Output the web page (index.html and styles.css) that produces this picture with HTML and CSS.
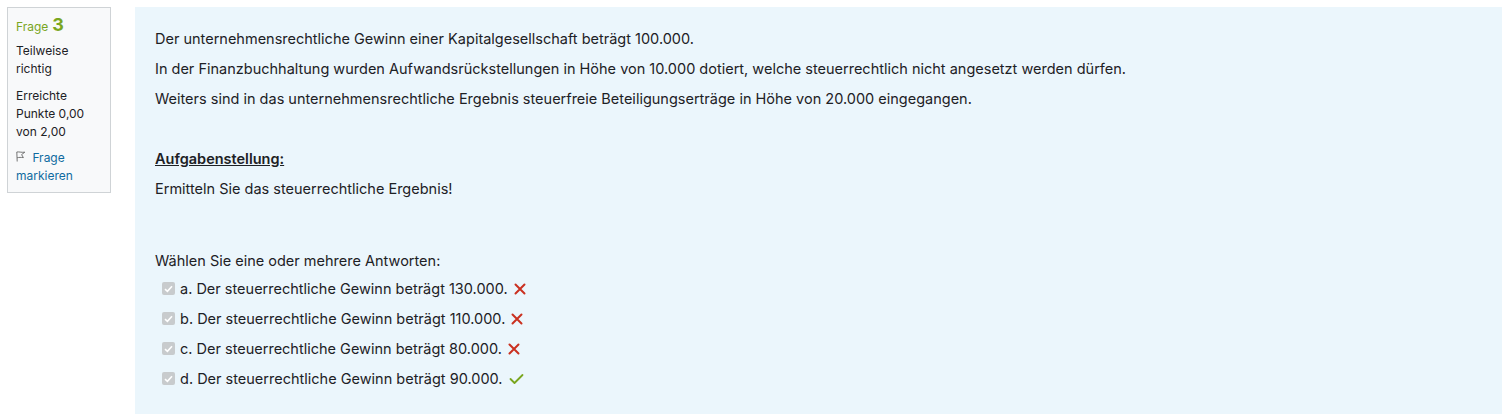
FILE: index.html
```html
<!DOCTYPE html>
<html lang="de">
<head>
<meta charset="utf-8">
<link rel="stylesheet" href="styles.css">
</head>
<body>
<div class="que">
  <div class="info">
    <h3 class="no"><span class="qlabel">Frage</span> <span class="qno">3</span></h3>
    <div class="state">Teilweise richtig</div>
    <div class="grade">Erreichte Punkte 0,00 von 2,00</div>
    <div class="flag">
      <svg class="flagicon" width="10" height="11" viewBox="0 0 10 11"><path d="M1.2 10.5 L0.8 1 M0.8 1 C3 0.6 5 1.6 8.8 1.2 L5.6 3.6 L7.4 6.6 C5 6.4 3 6.2 1.1 6.8" fill="none" stroke="#666" stroke-width="0.9" stroke-linejoin="round"/></svg>
      <a href="#">Frage markieren</a>
    </div>
  </div>
  <div class="content">
    <div class="qtext">
      <p>Der unternehmensrechtliche Gewinn einer Kapitalgesellschaft beträgt 100.000.</p>
      <p>In der Finanzbuchhaltung wurden Aufwandsrückstellungen in Höhe von 10.000 dotiert, welche steuerrechtlich nicht angesetzt werden dürfen.</p>
      <p>Weiters sind in das unternehmensrechtliche Ergebnis steuerfreie Beteiligungserträge in Höhe von 20.000 eingegangen.</p>
      <p>&nbsp;</p>
      <p><strong class="task">Aufgabenstellung:</strong></p>
      <p>Ermitteln Sie das steuerrechtliche Ergebnis!</p>
      <p>&nbsp;</p>
    </div>
    <div class="prompt">Wählen Sie eine oder mehrere Antworten:</div>
    <div class="answers">
      <div class="opt"><span class="cb"><svg width="9" height="8" viewBox="0 0 9 8"><path d="M1 4.2 L3.4 6.4 L8 1.2" fill="none" stroke="#fff" stroke-width="1.6"/></svg></span><span>a. Der steuerrechtliche Gewinn beträgt 130.000.</span><svg class="mark" width="12" height="12" viewBox="0 0 12 12"><path d="M1.5 1.5 L10.5 10.5 M10.5 1.5 L1.5 10.5" stroke="#ca3120" stroke-width="2" stroke-linecap="round"/></svg></div>
      <div class="opt"><span class="cb"><svg width="9" height="8" viewBox="0 0 9 8"><path d="M1 4.2 L3.4 6.4 L8 1.2" fill="none" stroke="#fff" stroke-width="1.6"/></svg></span><span>b. Der steuerrechtliche Gewinn beträgt 110.000.</span><svg class="mark" width="12" height="12" viewBox="0 0 12 12"><path d="M1.5 1.5 L10.5 10.5 M10.5 1.5 L1.5 10.5" stroke="#ca3120" stroke-width="2" stroke-linecap="round"/></svg></div>
      <div class="opt"><span class="cb"><svg width="9" height="8" viewBox="0 0 9 8"><path d="M1 4.2 L3.4 6.4 L8 1.2" fill="none" stroke="#fff" stroke-width="1.6"/></svg></span><span>c. Der steuerrechtliche Gewinn beträgt 80.000.</span><svg class="mark" width="12" height="12" viewBox="0 0 12 12"><path d="M1.5 1.5 L10.5 10.5 M10.5 1.5 L1.5 10.5" stroke="#ca3120" stroke-width="2" stroke-linecap="round"/></svg></div>
      <div class="opt"><span class="cb"><svg width="9" height="8" viewBox="0 0 9 8"><path d="M1 4.2 L3.4 6.4 L8 1.2" fill="none" stroke="#fff" stroke-width="1.6"/></svg></span><span>d. Der steuerrechtliche Gewinn beträgt 90.000.</span><svg class="mark ok" width="15" height="12" viewBox="0 0 15 12"><path d="M1.5 6 L5.5 10 L13.5 2" fill="none" stroke="#7aa61f" stroke-width="1.8" stroke-linecap="round" stroke-linejoin="round"/></svg></div>
    </div>
  </div>
</div>
</body>
</html>
```
FILE: styles.css
```css
html, body {
  margin: 0;
  padding: 0;
  background: #fff;
}
body {
  font-family: Inter, "Noto Sans", "Liberation Sans", sans-serif;
  color: #1d2125;
  font-size: 14px;
}
.que {
  display: flex;
  align-items: flex-start;
  padding: 7px 10px 0 7px;
  gap: 24px;
}
.info {
  width: 104px;
  box-sizing: border-box;
  flex: none;
  background: #f8f9fa;
  border: 1px solid #cfd3d6;
  padding: 6px 8px 7px 8px;
  font-size: 12px;
  line-height: 18px;
  color: #1d2125;
}
.info h3 {
  margin: 0 0 4px 0;
  font-weight: normal;
  line-height: 22px;
}
.qlabel {
  color: #7aa61f;
  font-size: 12px;
}
.qno {
  color: #7aa61f;
  font-size: 18px;
  font-weight: bold;
}
.state {
  margin-bottom: 9px;
}
.grade {
  margin-bottom: 8px;
}
.flag a {
  color: #0f6ba0;
  text-decoration: none;
}
.flagicon {
  margin-right: 3px;
}
.content {
  flex: 1;
  background: #ebf6fc;
  padding: 21px 20px 20px 20px;
  min-height: 366px;
}
.qtext {
  font-size: 14.5px;
}
.qtext p {
  margin: 0 0 9px 0;
  line-height: 21px;
}
.task {
  text-decoration: underline;
  font-weight: 600;
}
.prompt {
  font-size: 14.5px;
  line-height: 21px;
  margin-top: 21px;
  margin-bottom: 7px;
}
.answers {
  padding-left: 7px;
  font-size: 14.5px;
}
.opt {
  display: flex;
  align-items: center;
  height: 21px;
  margin-bottom: 9px;
}
.cb {
  width: 13px;
  height: 13px;
  border-radius: 2px;
  background: #c8cbcd;
  display: inline-flex;
  align-items: center;
  justify-content: center;
  margin-right: 5px;
  flex: none;
}
.mark {
  margin-left: 6px;
}
```
